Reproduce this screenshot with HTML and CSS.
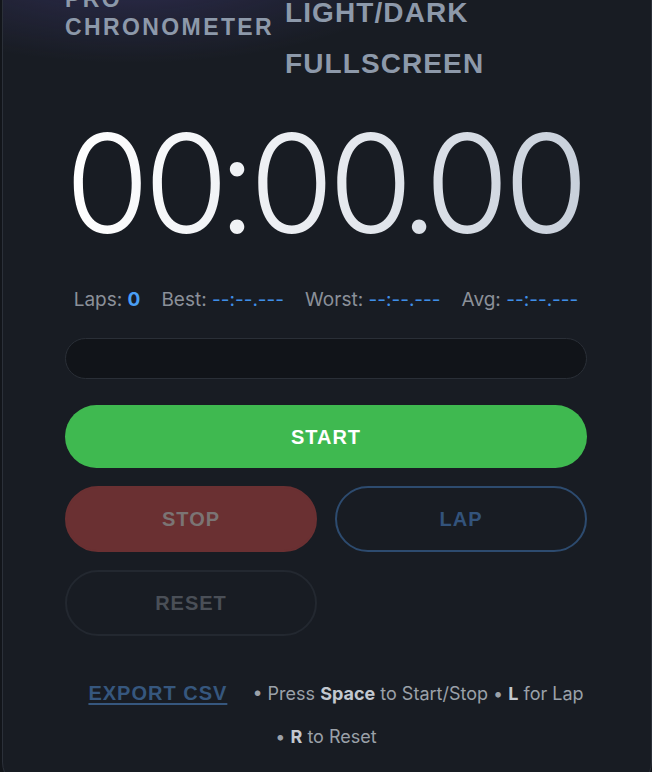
FILE: index.html
```html
<!DOCTYPE html>
<html lang="en">
<head>
<meta charset="utf-8">
<title>Pro Chronometer</title>
<link rel="stylesheet" href="styles.css">
</head>
<body>
<main class="card">
  <header class="top">
    <h1 class="title">PRO CHRONOMETER</h1>
    <div class="controls">
      <button class="ctrl">LIGHT/DARK</button>
      <button class="ctrl">FULLSCREEN</button>
    </div>
  </header>
  <div class="timer">00<span class="sep colon">:</span>00<span class="sep dot">.</span>000</div>
  <div class="stats">
    <span class="stat">Laps: <b class="num">0</b></span>
    <span class="stat">Best: <span class="val">--:--.---</span></span>
    <span class="stat">Worst: <span class="val">--:--.---</span></span>
    <span class="stat">Avg: <span class="val">--:--.---</span></span>
  </div>
  <div class="progress"></div>
  <div class="actions">
    <button class="btn start">START</button>
    <button class="btn stop">STOP</button>
    <button class="btn lap">LAP</button>
    <button class="btn reset">RESET</button>
  </div>
  <p class="footer"><button class="export">EXPORT CSV</button> <span class="hint">• Press <b>Space</b> to Start/Stop • <b>L</b> for Lap • <b>R</b> to Reset</span></p>
</main>
</body>
</html>
```
FILE: styles.css
```css
html, body {
  margin: 0;
  padding: 0;
  background: #12151a;
}
body {
  font-family: Inter, "Liberation Sans", sans-serif;
  overflow: hidden;
}
.card {
  box-sizing: border-box;
  width: 650px;
  margin: -60px 0 0 2px;
  padding: 44px 64px 40px 62px;
  border: 1px solid #2b3039;
  border-radius: 28px;
  background:
    radial-gradient(ellipse 290px 100px at 130px 22px, rgba(98, 84, 190, 0.3), rgba(98, 84, 190, 0) 100%),
    #181c23;
}
.top {
  display: flex;
  align-items: flex-start;
  gap: 8px;
}
.title {
  width: 212px;
  margin: 0;
  font-family: "Liberation Sans", Arial, sans-serif;
  font-size: 23px;
  font-weight: 700;
  line-height: 28px;
  letter-spacing: 2.4px;
  color: #8d99aa;
}
.controls {
  display: flex;
  flex-direction: column;
  align-items: flex-start;
  gap: 19px;
  margin-top: 12px;
}
.ctrl {
  padding: 0;
  border: 0;
  background: none;
  font-family: "Liberation Sans", Arial, sans-serif;
  font-size: 28px;
  font-weight: 700;
  line-height: 32px;
  letter-spacing: 1.1px;
  color: #8d99aa;
}
.timer {
  margin-top: 33px;
  overflow: hidden;
  white-space: nowrap;
  font-family: Inter, sans-serif;
  font-size: 137px;
  font-weight: 300;
  line-height: 140px;
  letter-spacing: -5.5px;
  background: linear-gradient(90deg, #ffffff 0%, #e8ebf0 50%, #c7cfda 100%);
  -webkit-background-clip: text;
  background-clip: text;
  color: transparent;
}
.colon {
  margin: 0 -1.5px 0 -5.5px;
}
.dot {
  margin: 0 -8px;
}
.stats {
  display: flex;
  justify-content: center;
  gap: 21px;
  margin-top: 36px;
  font-size: 19px;
  line-height: 22px;
  color: #8b9099;
}
.num {
  font-weight: 700;
  color: #4a9ff5;
}
.val {
  color: #3f8fe8;
}
.progress {
  box-sizing: border-box;
  height: 41px;
  margin-top: 27px;
  border: 1px solid #2a2f37;
  border-radius: 999px;
  background: #111419;
}
.actions {
  display: grid;
  grid-template-columns: 1fr 1fr;
  gap: 18px;
  margin-top: 26px;
}
.btn {
  box-sizing: border-box;
  padding: 20px 0;
  border: 2px solid transparent;
  border-radius: 999px;
  font-family: "Liberation Sans", Arial, sans-serif;
  font-size: 20px;
  font-weight: 700;
  line-height: 22px;
  letter-spacing: 1px;
  background: none;
}
.start {
  grid-column: 1 / -1;
  border: 0;
  padding: 20.5px 0;
  background: #3fb950;
  color: #ffffff;
}
.stop {
  background: #6a3032;
  border-color: #6a3032;
  color: #7b7474;
}
.lap {
  border-color: #2d4b6f;
  color: #33537b;
}
.reset {
  border-color: #232830;
  color: #4a4f57;
}
.footer {
  margin: 26px 0 0;
  text-align: center;
  font-size: 18px;
  line-height: 1.35;
  color: #9ba1a9;
}
.export {
  padding: 20px;
  border: 0;
  background: none;
  font-family: "Liberation Sans", Arial, sans-serif;
  font-size: 20px;
  font-weight: 700;
  letter-spacing: 1px;
  text-decoration: underline;
  text-underline-offset: 3px;
  color: #36577e;
}
.hint b {
  font-weight: 700;
  color: #c3c8cf;
}
```
